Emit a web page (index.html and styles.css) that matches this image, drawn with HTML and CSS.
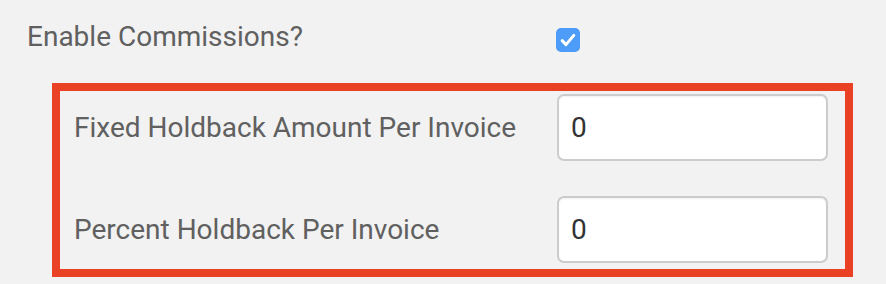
FILE: index.html
```html
<!DOCTYPE html>
<html>
<head>
  <meta name="viewport" content="width=device-width, initial-scale=1">
  <link rel="stylesheet" href="styles.css">
</head>
<body>
  <div class="settings">
    <div class="toggle-row">
      <label class="toggle-label" for="enable">Enable Commissions?</label>
      <span class="check" id="enable">
        <svg width="24" height="24" viewBox="0 0 24 24"><path d="M6.2 12.6 L10 16.6 L17.8 7.4" fill="none" stroke="#fff" stroke-width="3" stroke-linecap="round" stroke-linejoin="round"/></svg>
      </span>
    </div>

    <div class="holdback">
      <div class="field">
        <label class="field-label" for="fixed">Fixed Holdback Amount Per Invoice</label>
        <input class="field-input" id="fixed" type="text" value="0">
      </div>
      <div class="field">
        <label class="field-label" for="percent">Percent Holdback Per Invoice</label>
        <input class="field-input" id="percent" type="text" value="0">
      </div>
    </div>
  </div>
</body>
</html>
```

FILE: styles.css
```css
* {
  box-sizing: border-box;
}

body {
  margin: 0;
  background: #f2f2f2;
  font-family: Roboto, "Liberation Sans", sans-serif;
  color: #606060;
}

.settings {
  padding-top: 17px;
}

.toggle-row {
  display: flex;
  align-items: flex-start;
  padding-left: 27px;
}

.toggle-label {
  width: 529px;
  font-size: 28px;
  line-height: 40px;
}

.check {
  display: block;
  width: 24px;
  height: 24px;
  margin-top: 11px;
  border-radius: 5px;
  background: #4d9cf8;
}

.check svg {
  display: block;
}

.holdback {
  width: 801px;
  margin: 26px 0 0 52px;
  border: 8px solid #ea4025;
  padding: 3px 0 6px 14px;
  display: flex;
  flex-direction: column;
  gap: 35px;
}

.field {
  display: grid;
  grid-template-columns: 483px 271px;
  align-items: center;
}

.field-label {
  font-size: 28px;
  line-height: 40px;
}

.field-input {
  height: 67px;
  width: 271px;
  border: 2px solid #cccccc;
  border-radius: 7px;
  background: #ffffff;
  box-shadow: inset 0 1px 2px rgba(0, 0, 0, 0.06);
  padding: 0 12px;
  font-family: Roboto, "Liberation Sans", sans-serif;
  font-size: 28px;
  color: #333333;
  outline: none;
}
```
